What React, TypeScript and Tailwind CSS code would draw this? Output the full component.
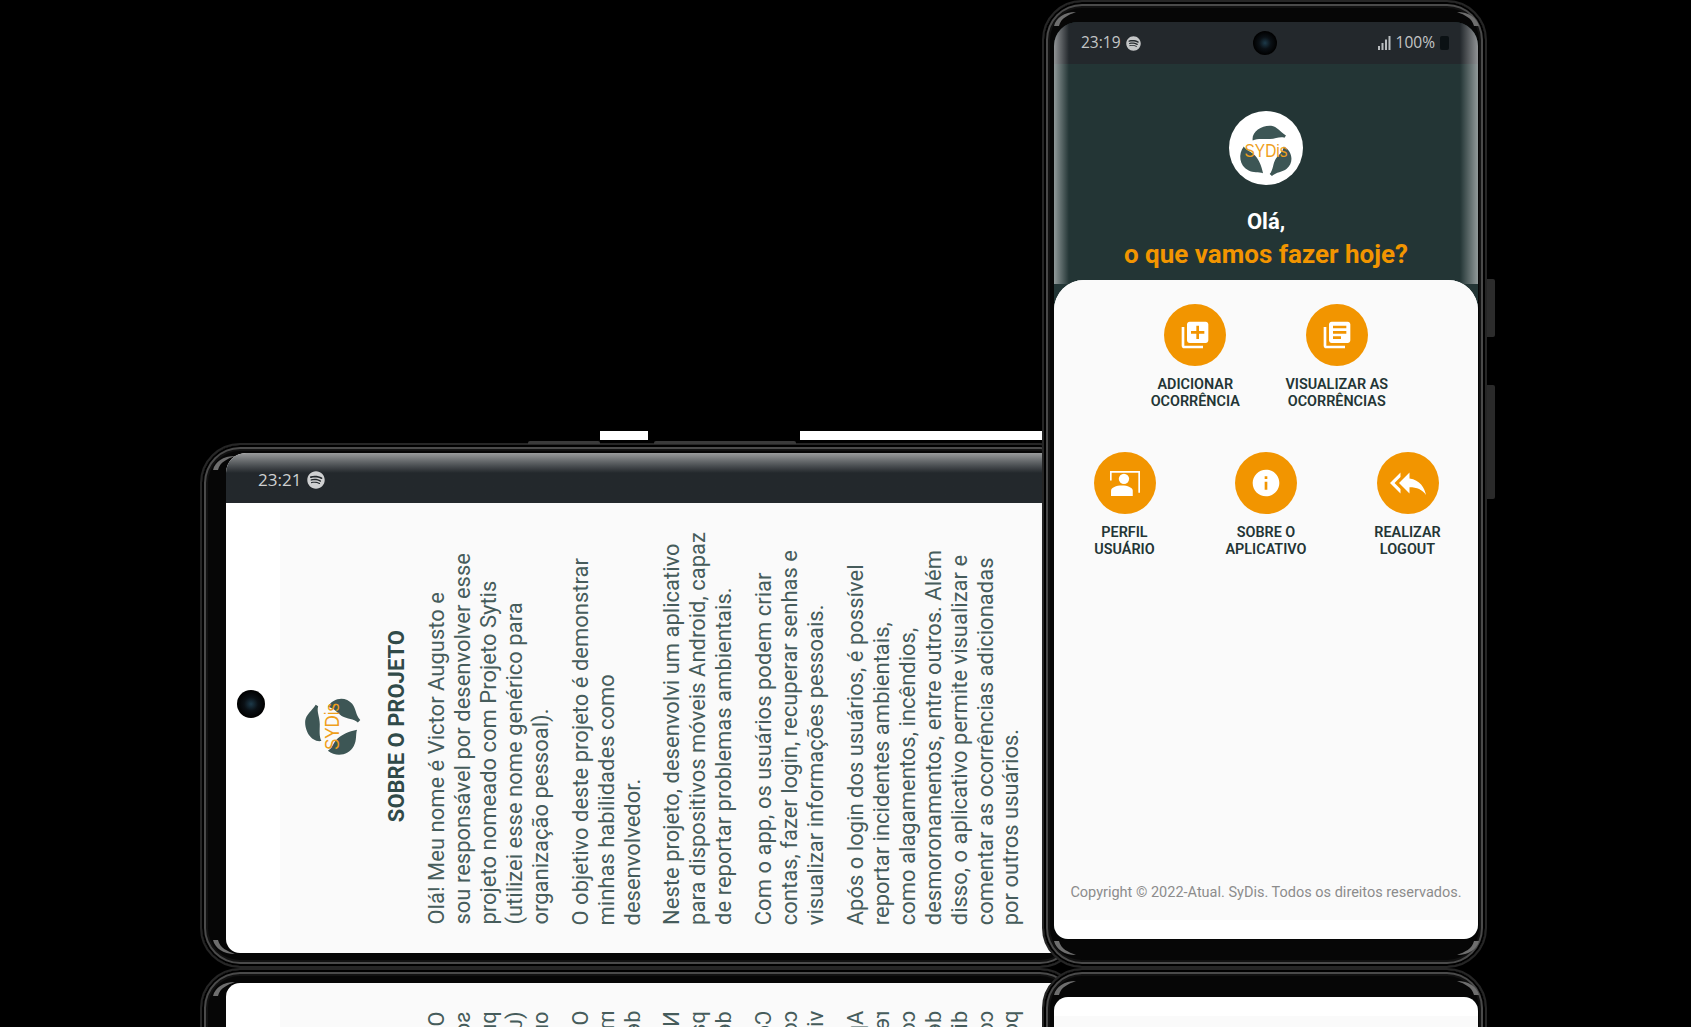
import { ReactNode } from 'react';
import { FaSpotify } from 'react-icons/fa';
import { MdInfo, MdLibraryAdd, MdLibraryBooks, MdReplyAll } from 'react-icons/md';

function Logo({ size, circle }: { size: number; circle?: boolean }) {
  return (
    <svg width={size} height={size} viewBox="0 0 100 100" className={circle ? '' : '-rotate-90'}>
      {circle && <circle cx="50" cy="50" r="50" fill="#fff" />}
      <path d="M32 40C30 28 44 19 57 20C65 21 69 28 77 33L75 36C68 34 62 38 53 38C45 38 38 37 32 40Z" fill="#3d5655" />
      <path d="M20 48C12 58 14 74 26 80C33 84 40 82 46 84C44 74 40 64 33 58C28 54 23 53 20 48Z" fill="#3d5655" />
      <path d="M74 48C86 54 88 70 78 78C72 83 64 82 58 88L55 85C60 80 59 72 63 65C66 60 73 56 74 48Z" fill="#3d5655" />
      <text x="50" y="62" textAnchor="middle" fontSize="24" fontFamily="'Liberation Sans', sans-serif" fill="#ef9f1c" textLength="58" lengthAdjust="spacingAndGlyphs">
        SYDis
      </text>
    </svg>
  );
}

function Camera({ size }: { size: string }) {
  return (
    <div className={`${size} rounded-full bg-[radial-gradient(circle_at_50%_50%,#1d3a4a_0%,#0a1015_35%,#000_70%)]`} />
  );
}

function Frame({ className, children }: { className: string; children: ReactNode }) {
  return (
    <div className={`rounded-[40px] bg-[#060606] border-2 border-[#262626] shadow-[inset_0_0_0_2px_#000,inset_0_0_0_4px_#4a4a4a,inset_0_0_0_6px_#111] ${className}`}>
      {children}
    </div>
  );
}

// glossy highlight where the rim curves round a corner
function Wedge({ className }: { className: string }) {
  return (
    <svg width="22" height="14" viewBox="0 0 22 14" className={`absolute ${className}`}>
      <path d="M0 0C2 8 10 14 22 14C14 11 7 8 5 0Z" fill="#6e6e6e" />
    </svg>
  );
}

function Action({ icon, lines }: { icon: ReactNode; lines: string[] }) {
  return (
    <div className="w-[141.5px] flex flex-col items-center">
      <div className="w-[62px] h-[62px] rounded-full bg-[#f29500] flex items-center justify-center text-white">
        {icon}
      </div>
      <div className="mt-[11px] text-center text-[14.4px] leading-[16.5px] font-semibold text-[#233535]">
        {lines.map(line => (
          <div key={line}>{line}</div>
        ))}
      </div>
    </div>
  );
}

function ProfileIcon() {
  return (
    <svg width="30" height="25" viewBox="0 0 29 24" fill="#fff">
      <path d="M0 0H29V21H27.4V1.6H1.6V9H0Z" />
      <circle cx="13.5" cy="7.5" r="5" />
      <path d="M1 24V19C1 16 6 14 11.5 14S22 16 22 19V24Z" />
    </svg>
  );
}

function SignalIcon() {
  return (
    <svg width="13" height="14" viewBox="0 0 13 14" fill="#b9bdbf">
      <rect x="0" y="10" width="2" height="4" />
      <rect x="3.5" y="7" width="2" height="7" />
      <rect x="7" y="3.5" width="2" height="10.5" />
      <rect x="10.5" y="0" width="2" height="14" />
    </svg>
  );
}

function PortraitPhone({ className }: { className: string }) {
  return (
    <Frame className={`absolute left-[1042px] top-0 w-[445px] h-[968px] pl-[10px] pr-[7px] pt-[20px] pb-[27px] ${className}`}>
      <div className="relative h-full rounded-t-[24px] rounded-b-[14px] overflow-hidden bg-[#233535] flex flex-col font-['Roboto',sans-serif]">
        <div className="h-[42px] shrink-0 bg-[#23282c] grid grid-cols-3 items-center pl-[27px] pr-[29px]">
          <div className="flex items-center gap-[4px] font-['Open_Sans',sans-serif] text-[15.5px] text-[#c4c6c7]">
            23:19
            <FaSpotify className="w-[15px] h-[15px] ml-[1px] text-[#c4c6c7]" />
          </div>
          <div className="flex justify-center">
            <Camera size="w-[24px] h-[24px]" />
          </div>
          <div className="flex items-center justify-end gap-[5px] font-['Open_Sans',sans-serif] text-[15.5px] text-[#c4c6c7]">
            <SignalIcon />
            100%
            <div className="w-[9px] h-[14px] rounded-[2px] bg-[#0b1114]" />
          </div>
        </div>

        <div className="h-[216px] shrink-0 flex flex-col items-center pt-[47px]">
          <Logo size={74} circle />
          <div className="mt-[21px] text-[22px] leading-[32px] font-bold text-white">Olá,</div>
          <div className="text-[26px] leading-[32px] font-bold text-[#f29500]">o que vamos fazer hoje?</div>
        </div>

        <div className="flex-1 rounded-t-[30px] bg-white flex flex-col pb-[19px]">
          <div className="flex-1 rounded-t-[30px] bg-[#fafafa] flex flex-col items-center pt-[24px] pb-[19px]">
            <div className="flex justify-center">
              <Action icon={<MdLibraryAdd size={32} />} lines={['ADICIONAR', 'OCORRÊNCIA']} />
              <Action icon={<MdLibraryBooks size={32} />} lines={['VISUALIZAR AS', 'OCORRÊNCIAS']} />
            </div>
            <div className="flex justify-center mt-[42px]">
              <Action icon={<ProfileIcon />} lines={['PERFIL', 'USUÁRIO']} />
              <Action icon={<MdInfo size={32} />} lines={['SOBRE O', 'APLICATIVO']} />
              <Action icon={<MdReplyAll size={36} />} lines={['REALIZAR', 'LOGOUT']} />
            </div>
            <div className="mt-auto text-[14.5px] leading-[16px] text-[#8c8c8c]">
              Copyright © 2022-Atual. SyDis. Todos os direitos reservados.
            </div>
          </div>
        </div>

        {/* curved glass edges */}
        <div className="absolute left-0 top-0 h-[262px] w-[15px] bg-gradient-to-r from-white/50 to-transparent" />
        <div className="absolute right-0 top-0 h-[262px] w-[18px] bg-gradient-to-l from-white/50 to-transparent" />
      </div>
      <Wedge className="left-[10px] top-[10px] -scale-y-100" />
      <Wedge className="right-[6px] top-[10px] -scale-100" />
      <Wedge className="left-[10px] bottom-[11px]" />
      <Wedge className="right-[6px] bottom-[11px] -scale-x-100" />
      <div className="absolute -right-[10px] top-[277px] w-[8px] h-[58px] bg-[#2c2c2c] rounded-r-[2px]" />
      <div className="absolute -right-[10px] top-[383px] w-[8px] h-[114px] bg-[#2a2a2a] rounded-r-[2px]" />
    </Frame>
  );
}

const paragraphs = [
  ['Olá! Meu nome é Victor Augusto e', 'sou responsável por desenvolver esse', 'projeto nomeado com Projeto Sytis', '(utilizei esse nome genérico para', 'organização pessoal).'],
  ['O objetivo deste projeto é demonstrar', 'minhas habilidades como', 'desenvolvedor.'],
  ['Neste projeto, desenvolvi um aplicativo', 'para dispositivos móveis Android, capaz', 'de reportar problemas ambientais.'],
  ['Com o app, os usuários podem criar', 'contas, fazer login, recuperar senhas e', 'visualizar informações pessoais.'],
  ['Após o login dos usuários, é possível', 'reportar incidentes ambientais,', 'como alagamentos, incêndios,', 'desmoronamentos, entre outros. Além', 'disso, o aplicativo permite visualizar e', 'comentar as ocorrências adicionadas', 'por outros usuários.'],
];

function LandscapePhone({ className }: { className: string }) {
  return (
    <Frame className={`absolute left-[200px] top-[443px] w-[880px] h-[525px] pl-[24px] pt-[8px] pb-[13px] pr-[8px] ${className}`}>
      <div className="relative h-full rounded-tl-[20px] rounded-bl-[14px] overflow-hidden bg-white flex flex-col">
        <div className="h-[50px] shrink-0 bg-gradient-to-b from-[#9a9c9d] via-[#23282c] via-40% to-[#23282c] flex items-center gap-[6px] pl-[32px] pt-[3px] font-['Open_Sans',sans-serif] text-[17px] text-[#cfd0d1]">
          23:21
          <FaSpotify className="w-[18px] h-[18px] text-[#cfd0d1]" />
        </div>
        <div className="flex-1 min-h-0 ml-[54px] bg-[#fafafa] flex items-end gap-[14px] pb-[28px] pl-[9px] font-['Roboto',sans-serif] text-[#465c5b]">
          <div className="self-center mb-[-24px]">
            <Logo size={81} />
          </div>
          <h2 className="self-center mb-[-24px] [writing-mode:vertical-rl] rotate-180 text-[22px] leading-[26px] font-bold text-[#304a49] whitespace-nowrap">
            SOBRE O PROJETO
          </h2>
          {paragraphs.map(lines => (
            <p key={lines[0]} className="[writing-mode:vertical-rl] rotate-180 text-[22px] leading-[25.9px] whitespace-nowrap">
              {lines.map(line => (
                <span key={line} className="block">{line}</span>
              ))}
            </p>
          ))}
        </div>
        <div className="absolute left-[11px] top-[237px]">
          <Camera size="w-[28px] h-[28px]" />
        </div>
      </div>
      <Wedge className="left-[11px] top-[11px] -scale-y-100" />
      <Wedge className="left-[11px] bottom-[12px]" />
      <div className="absolute left-[326px] -top-[4px] w-[72px] h-[3px] bg-[#3a3a3a] rounded-t-[2px]" />
      <div className="absolute left-[452px] -top-[4px] w-[142px] h-[3px] bg-[#3a3a3a] rounded-t-[2px]" />
    </Frame>
  );
}

export default function App() {
  return (
    <div className="relative w-full h-[1027px] overflow-hidden bg-black">
      {/* white slivers of the mockup background */}
      <div className="absolute left-[600px] top-[431px] w-[48px] h-[9px] bg-white" />
      <div className="absolute left-[800px] top-[431px] w-[243px] h-[9px] bg-white" />

      {/* floor reflections */}
      <LandscapePhone className="origin-bottom -scale-y-100" />
      <PortraitPhone className="origin-bottom -scale-y-100" />

      <LandscapePhone className="" />
      <PortraitPhone className="" />
    </div>
  );
}
